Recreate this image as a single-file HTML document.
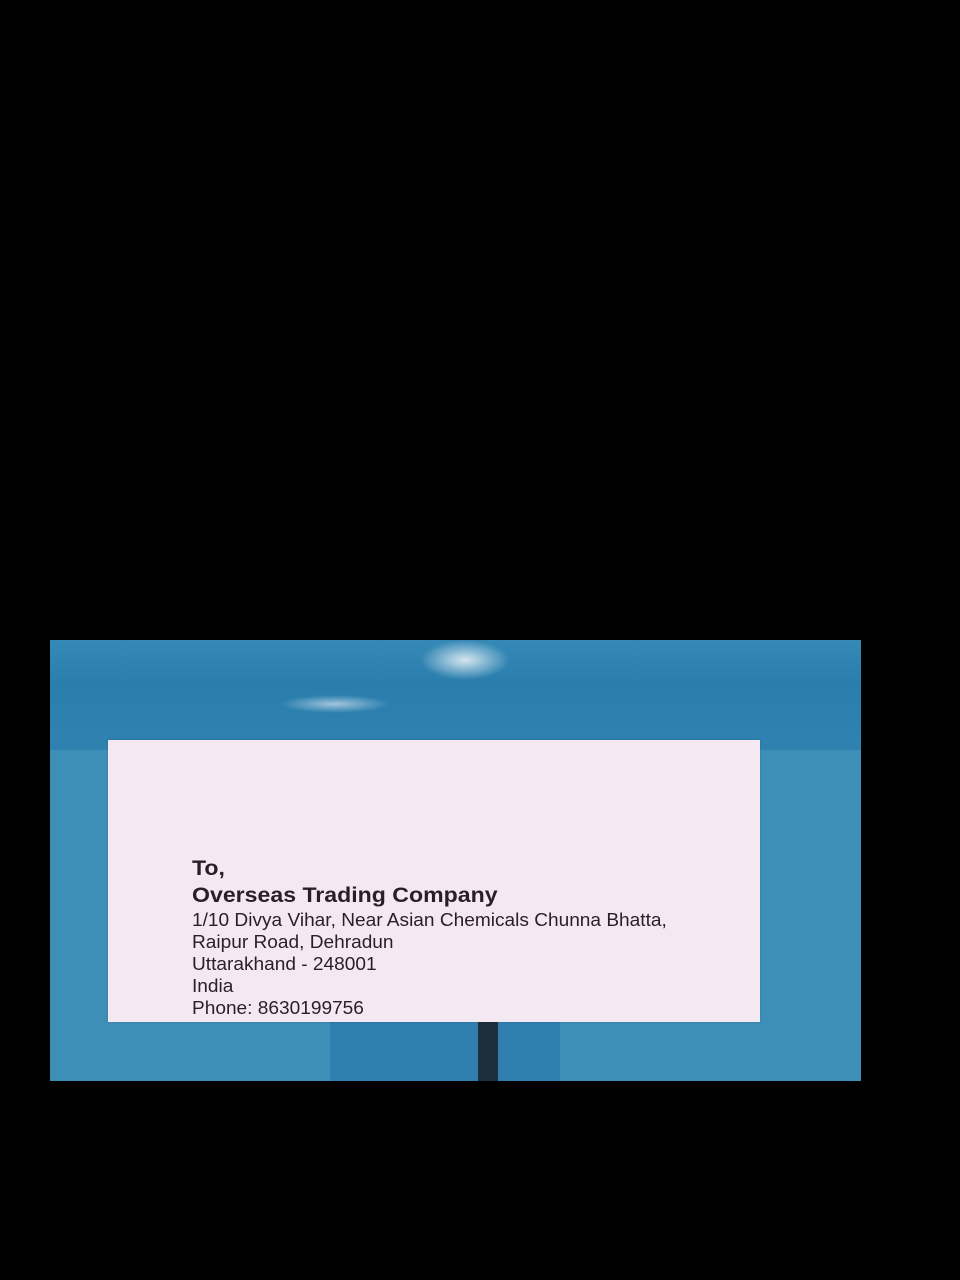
<!DOCTYPE html>
<html><head><style>
body{margin:0;width:960px;height:1280px;background:#000;position:relative;overflow:hidden;font-family:"Liberation Sans",sans-serif}
.ph{position:absolute;left:50px;top:640px;width:811px;height:441px;background:#3b8cb5;overflow:hidden}
.tape{position:absolute;left:0;top:0;width:811px;height:110px;background:linear-gradient(180deg,#3589b6 0%,#2a7eae 40%,#2f82b0 100%)}
.shine{position:absolute;left:370px;top:0;width:90px;height:40px;background:radial-gradient(ellipse,rgba(255,255,255,.8),rgba(255,255,255,0) 70%)}
.shine2{position:absolute;left:230px;top:55px;width:110px;height:18px;background:radial-gradient(ellipse,rgba(255,255,255,.55),rgba(255,255,255,0) 70%)}
.lower{position:absolute;left:0;top:110px;width:811px;height:331px;background:#3e8fb8}
.band{position:absolute;left:280px;top:380px;width:230px;height:61px;background:#2f7fb0}
.strip{position:absolute;left:428px;top:380px;width:20px;height:61px;background:#1c2f3a}
.label{position:absolute;left:58px;top:100px;width:652px;height:282px;background:#f4e8f2;box-shadow:0 0 2px rgba(0,0,0,.2)}
.t{position:absolute;left:142px;color:#2a1f28;white-space:nowrap;transform-origin:0 0}
.b{font-weight:bold;font-size:21px;transform:scaleX(1.1)}
.n{font-size:18px;transform:scaleX(1.06)}
</style></head><body>
<div class="ph">
<div class="tape"></div><div class="shine"></div><div class="shine2"></div>
<div class="lower"></div>
<div class="band"></div><div class="strip"></div>
<div class="label"></div>
<div class="t b" style="top:217px">To,</div>
<div class="t b" style="top:244px">Overseas Trading Company</div>
<div class="t n" style="top:270px">1/10 Divya Vihar, Near Asian Chemicals Chunna Bhatta,</div>
<div class="t n" style="top:292px">Raipur Road, Dehradun</div>
<div class="t n" style="top:314px">Uttarakhand - 248001</div>
<div class="t n" style="top:336px">India</div>
<div class="t n" style="top:358px">Phone: 8630199756</div>
</div>
</body></html>
